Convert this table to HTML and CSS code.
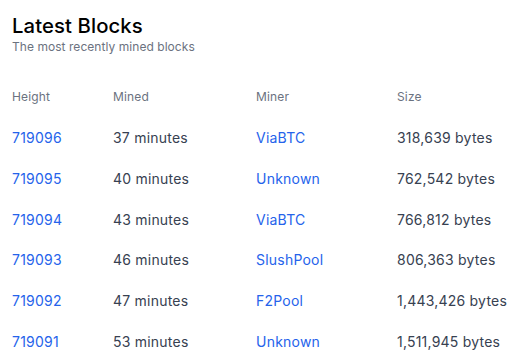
FILE: index.html
```
<!DOCTYPE html>
<html>
<head>
<meta charset="utf-8">
<link rel="stylesheet" href="styles.css">
</head>
<body>
<div class="page">
  <div class="head">
    <h1 class="title">Latest Blocks</h1>
    <p class="subtitle">The most recently mined blocks</p>
  </div>
  <div class="table">
    <div class="th">Height</div><div class="th">Mined</div><div class="th">Miner</div><div class="th">Size</div>
    <a class="td link">719096</a><div class="td">37 minutes</div><a class="td link">ViaBTC</a><div class="td">318,639 bytes</div>
    <a class="td link">719095</a><div class="td">40 minutes</div><a class="td link">Unknown</a><div class="td">762,542 bytes</div>
    <a class="td link">719094</a><div class="td">43 minutes</div><a class="td link">ViaBTC</a><div class="td">766,812 bytes</div>
    <a class="td link">719093</a><div class="td">46 minutes</div><a class="td link">SlushPool</a><div class="td">806,363 bytes</div>
    <a class="td link">719092</a><div class="td">47 minutes</div><a class="td link">F2Pool</a><div class="td">1,443,426 bytes</div>
    <a class="td link">719091</a><div class="td">53 minutes</div><a class="td link">Unknown</a><div class="td">1,511,945 bytes</div>
  </div>
</div>
</body>
</html>
```
FILE: styles.css
```
html, body { margin: 0; padding: 0; background: #fff; }
body { font-family: Inter, "Noto Sans", sans-serif; }
.page { padding: 14px 12px 0 12px; }
.head { display: flex; flex-direction: column; }
.title { margin: 0; font-size: 20.3px; line-height: 24px; font-weight: 500; color: #000; letter-spacing: 0.1px; }
.subtitle { margin: 1px 0 0 0; font-size: 12px; line-height: 16px; color: #6b7280; letter-spacing: 0.05px; }
.table { display: grid; grid-template-columns: 101px 143px 141px auto; margin-top: 34px; }
.th { font-size: 12px; line-height: 16px; color: #6b7280; padding-bottom: 23px; letter-spacing: 0.15px; }
.td { font-size: 14px; line-height: 20px; color: #374151; padding-bottom: 20.8px; letter-spacing: 0.22px; }
.link { color: #2563eb; text-decoration: none; }
```
